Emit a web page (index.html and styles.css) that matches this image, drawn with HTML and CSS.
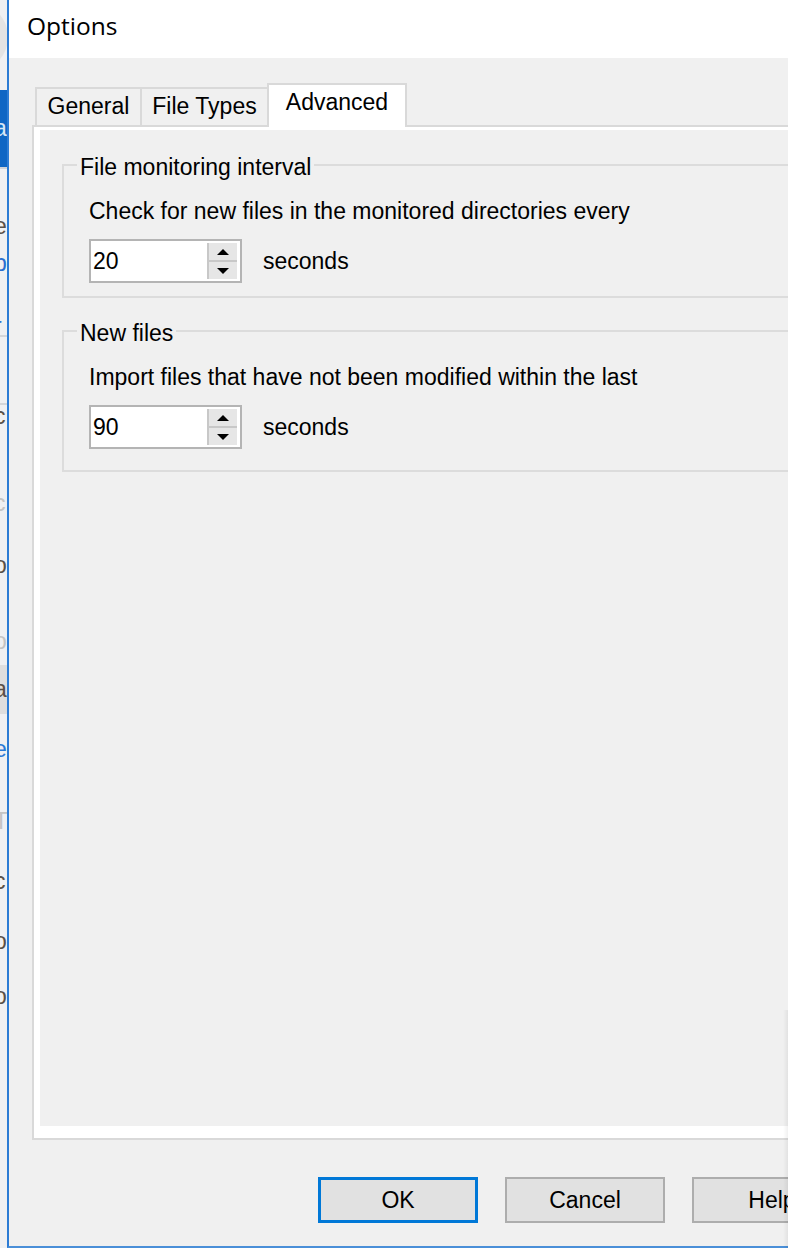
FILE: index.html
```html
<!DOCTYPE html>
<html lang="en">
<head>
<meta charset="utf-8">
<title>Options</title>
<link rel="stylesheet" href="styles.css">
</head>
<body>
<div class="screen">
  <div class="bgwin">
    <div class="bg-circle"></div>
    <div class="bg-head"><span class="bg-glyph">a</span></div>
    <div class="bg-list">
      <div class="bg-item"><span>e</span></div>
      <div class="bg-item bg-link"><span>b</span></div>
      <div class="bg-item bg-link"><span>r</span></div>
      <div class="bg-item"><span>c</span></div>
      <div class="bg-item bg-faint"><span>c</span></div>
      <div class="bg-item"><span>o</span></div>
      <div class="bg-item bg-faint"><span>o</span></div>
      <div class="bg-item bg-band"><span>a</span></div>
      <div class="bg-item bg-blue"><span>e</span></div>
      <div class="bg-item bg-faint"><span>T</span></div>
      <div class="bg-item"><span>c</span></div>
      <div class="bg-item"><span>o</span></div>
      <div class="bg-item"><span>o</span></div>
    </div>
  </div>

  <div class="dialog">
    <div class="titlebar">Options</div>
    <div class="client">
      <div class="tabs">
        <div class="tab tab-general">General</div>
        <div class="tab tab-types">File Types</div>
        <div class="tab tab-active">Advanced</div>
      </div>
      <div class="tabpanel">
        <div class="tabpage">
          <fieldset class="group">
            <legend class="group-title">File monitoring interval</legend>
            <div class="group-label">Check for new files in the monitored directories every</div>
            <div class="spin-row">
              <div class="spinbox">
                <span class="spin-value">20</span>
                <div class="spin-buttons">
                  <div class="spin-btn"><span class="arrow-up"></span></div>
                  <div class="spin-btn"><span class="arrow-down"></span></div>
                </div>
              </div>
              <span class="unit">seconds</span>
            </div>
          </fieldset>
          <fieldset class="group group-second">
            <legend class="group-title">New files</legend>
            <div class="group-label">Import files that have not been modified within the last</div>
            <div class="spin-row">
              <div class="spinbox">
                <span class="spin-value">90</span>
                <div class="spin-buttons">
                  <div class="spin-btn"><span class="arrow-up"></span></div>
                  <div class="spin-btn"><span class="arrow-down"></span></div>
                </div>
              </div>
              <span class="unit">seconds</span>
            </div>
          </fieldset>
        </div>
      </div>
      <div class="footer">
        <button class="btn btn-default">OK</button>
        <button class="btn">Cancel</button>
        <button class="btn">Help</button>
      </div>
    </div>
  </div>
  <div class="edge-shadow"></div>
</div>
</body>
</html>
```

FILE: styles.css
```css
html, body {
  margin: 0;
  padding: 0;
  background: #f0f0f0;
}

.screen {
  position: relative;
  display: flex;
  width: 788px;
  height: 1248px;
  overflow: hidden;
  font-family: "Liberation Sans", Arial, sans-serif;
  font-size: 23px;
  color: #000;
}

/* background window strip */
.bgwin {
  flex: none;
  width: 7px;
  height: 1248px;
  overflow: hidden;
  background: #eff0f2;
  display: flex;
  flex-direction: column;
}

.bg-circle {
  flex: none;
  width: 70px;
  height: 70px;
  margin-left: -62px;
  margin-top: 2px;
  border-radius: 50%;
  background: #e3e3e3;
}

.bg-head {
  flex: none;
  height: 77px;
  margin-top: 18px;
  background: #0f66c4;
  border-bottom: 2px solid #cfd3d8;
  line-height: 77px;
  overflow: hidden;
}

.bg-glyph {
  display: inline-block;
  margin-left: -6px;
  color: #d8e6f6;
}

.bg-list {
  display: flex;
  flex-direction: column;
}

.bg-item {
  flex: none;
  height: 22px;
  line-height: 22px;
  overflow: hidden;
  color: #5a5048;
}

.bg-item span {
  display: inline-block;
  margin-left: -6px;
}

.bg-item:nth-child(1) { margin-top: 46px; }
.bg-item:nth-child(2) { margin-top: 15px; }
.bg-item:nth-child(3) { margin-top: 41px; border-bottom: 2px solid #d4d6d9; height: 20px; }
.bg-item:nth-child(4) { margin-top: 66px; border-top: 2px solid #d4d6d9; }
.bg-item:nth-child(5) { margin-top: 65px; }
.bg-item:nth-child(6) { margin-top: 40px; }
.bg-item:nth-child(7) { margin-top: 54px; }
.bg-item:nth-child(8) { margin-top: 13px; }
.bg-item:nth-child(9) { margin-top: 24px; }
.bg-item:nth-child(10) { margin-top: 50px; }
.bg-item:nth-child(11) { margin-top: 38px; }
.bg-item:nth-child(12) { margin-top: 38px; }
.bg-item:nth-child(13) { margin-top: 33px; }

.bg-link {
  color: #2a6fd0;
  text-decoration: underline;
}

.bg-blue {
  color: #2a7ad6;
}

.bg-faint {
  color: #c4c4c4;
}

.bg-band {
  height: 49px;
  line-height: 49px;
  background: #dedede;
}

/* dialog */
.dialog {
  flex: none;
  width: 869px;
  height: 1248px;
  box-sizing: border-box;
  border-left: 2px solid #2b7bd4;
  border-bottom: 2px solid #4a8fd8;
  background: #f0f0f0;
  display: flex;
  flex-direction: column;
}

.titlebar {
  flex: none;
  height: 58px;
  box-sizing: border-box;
  padding: 0 0 7px 18px;
  line-height: 51px;
  background: #fff;
  font-family: "Open Sans", "Noto Sans", sans-serif;
  font-size: 24.5px;
  color: #000;
}

.client {
  flex: 1;
  display: flex;
  flex-direction: column;
  padding: 0 24px 0 23px;
  min-height: 0;
}

.tabs {
  flex: none;
  display: flex;
  align-items: flex-end;
  margin-top: 25px;
  margin-bottom: -2px;
  padding-left: 3px;
  position: relative;
  z-index: 1;
}

.tab {
  flex: none;
  box-sizing: border-box;
  height: 38px;
  margin-bottom: 2px;
  border: 2px solid #d9d9d9;
  border-bottom: none;
  background: #f0f0f0;
  text-align: center;
  line-height: 34px;
  white-space: nowrap;
}

.tab-general {
  width: 107px;
}

.tab-types {
  width: 129px;
  margin-left: -2px;
}

.tab-active {
  width: 140px;
  height: 44px;
  margin-bottom: 0;
  margin-left: -2px;
  background: #fff;
}

.tabpanel {
  flex: 1;
  min-height: 0;
  display: flex;
  flex-direction: column;
  border: 2px solid #d9d9d9;
  background: #fff;
  padding: 3px 6px 12px 6px;
}

.tabpage {
  flex: 1;
  background: #f0f0f0;
  padding: 0 22px;
  overflow: hidden;
  display: flex;
  flex-direction: column;
}

/* group boxes */
.group {
  margin: 22px 0 0 0;
  padding: 0 0 13px 25px;
  border: 2px solid #dcdcdc;
  min-inline-size: 0;
}

.group-second {
  margin-top: 20px;
  padding-bottom: 21px;
}

.group-title {
  margin-left: -12px;
  padding: 5px 3px 0 3px;
  line-height: 20px;
  white-space: nowrap;
}

.group-label {
  margin-top: 21px;
  line-height: 26px;
  white-space: nowrap;
}

.spin-row {
  display: flex;
  align-items: center;
  gap: 21px;
  margin-top: 15px;
}

.spinbox {
  flex: none;
  box-sizing: border-box;
  width: 153px;
  height: 44px;
  border: 2px solid #b4b4b4;
  background: #fff;
  display: flex;
  align-items: center;
  justify-content: space-between;
  padding: 0 3px 0 2px;
}

.spin-value {
  line-height: 26px;
}

.spin-buttons {
  flex: none;
  width: 30px;
  height: 36px;
  display: flex;
  flex-direction: column;
  border-left: 2px solid #c8c8c8;
  box-sizing: border-box;
}

.spin-btn {
  flex: 1;
  display: flex;
  align-items: center;
  justify-content: center;
  background: #e6e6e6;
}

.spin-btn + .spin-btn {
  border-top: 2px solid #c8c8c8;
}

.arrow-up,
.arrow-down {
  width: 0;
  height: 0;
  border-left: 6px solid transparent;
  border-right: 6px solid transparent;
}

.arrow-up {
  border-bottom: 6px solid #000;
}

.arrow-down {
  border-top: 6px solid #000;
}

.unit {
  line-height: 26px;
}

/* footer buttons */
.footer {
  flex: none;
  display: flex;
  justify-content: flex-end;
  gap: 27px;
  padding: 37px 0 23px 0;
}

.btn {
  flex: none;
  box-sizing: border-box;
  width: 160px;
  height: 46px;
  margin: 0;
  padding: 0;
  border: 2px solid #adadad;
  background: #e1e1e1;
  font-family: "Liberation Sans", Arial, sans-serif;
  font-size: 23px;
  color: #000;
  line-height: 26px;
}

.btn-default {
  border: 3px solid #0078d7;
}

.edge-shadow {
  position: absolute;
  right: 0;
  top: 1010px;
  bottom: 0;
  width: 5px;
  background: linear-gradient(to right, rgba(0, 0, 0, 0), rgba(0, 0, 0, 0.06));
}
```
